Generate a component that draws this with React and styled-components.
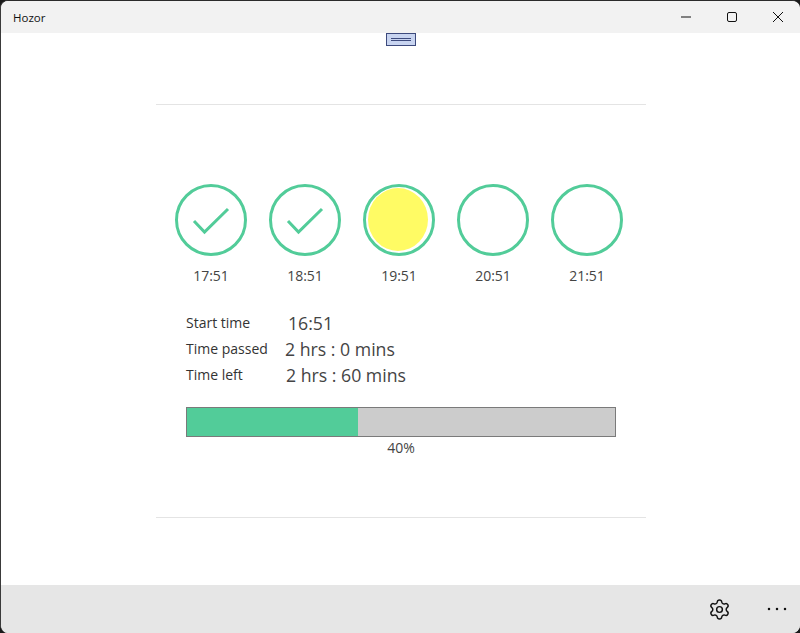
import React from "react";
import styled, { createGlobalStyle } from "styled-components";
import { Settings } from "lucide-react";

const Global = createGlobalStyle`
	html, body {
		margin: 0;
		padding: 0;
		background: #1a1a1a;
	}
	body {
		font-family: "Open Sans", "Noto Sans", "Liberation Sans", sans-serif;
		color: #333;
	}
`;

const Win = styled.div`
	width: 800px;
	height: 633px;
	box-sizing: border-box;
	display: flex;
	flex-direction: column;
	background: #fff;
	border-top: 1px solid #2b2b2b;
	border-left: 1px solid #3a3a3a;
	border-radius: 8px;
	overflow: hidden;
`;

const TitleBar = styled.div`
	height: 32px;
	flex: none;
	display: flex;
	align-items: center;
	justify-content: space-between;
	background: #f2f2f2;
	padding-left: 12px;
	font-size: 11.5px;
	color: #111;
`;

const WinButtons = styled.div`
	display: flex;
	margin-right: -1px;
`;

const WinButton = styled.div`
	width: 46px;
	height: 32px;
	display: flex;
	align-items: center;
	justify-content: center;
`;

const Main = styled.div`
	flex: 1;
	display: flex;
	flex-direction: column;
	align-items: center;
	position: relative;
`;

const Grip = styled.div`
	position: absolute;
	top: 0;
	left: 385px;
	width: 30px;
	height: 13px;
	box-sizing: border-box;
	background: #c8d4f0;
	border: 1px solid #3d4a7d;
	display: flex;
	align-items: center;
	justify-content: center;

	&::after {
		content: "";
		width: 20px;
		height: 3px;
		box-sizing: border-box;
		border-top: 1px solid #3d4a7d;
		border-bottom: 1px solid #3d4a7d;
	}
`;

const Panel = styled.div`
	width: 490px;
	height: 414px;
	margin-top: 71px;
	margin-left: 1px;
	box-sizing: border-box;
	border-top: 1px solid #e4e4e4;
	border-bottom: 1px solid #e4e4e4;
	padding: 79px 0 0 19px;
`;

const Steps = styled.div`
	display: flex;
	gap: 22px;
`;

const Step = styled.div`
	width: 72px;
	display: flex;
	flex-direction: column;
	align-items: center;
`;

const Circle = styled.div`
	width: 72px;
	height: 72px;
	box-sizing: border-box;
	border-radius: 50%;
	border: 3px solid #52cc99;
	display: flex;
	align-items: center;
	justify-content: center;
`;

const Sun = styled.div`
	width: 60px;
	height: 63px;
	margin: 0 2px 1px 0;
	flex: none;
	border-radius: 50%;
	background: #fffb64;
`;

const StepTime = styled.div`
	margin-top: 10px;
	font-size: 14px;
	line-height: 20px;
	color: #444;
`;

const Stats = styled.div`
	margin: 24px 0 0 11px;
	display: flex;
	flex-direction: column;
`;

const Stat = styled.div`
	height: 26px;
	display: flex;
	align-items: center;
`;

const StatName = styled.div`
	width: ${props => props.$w}px;
	font-size: 14px;
	color: #333;
	position: relative;
	top: -1px;
`;

const StatValue = styled.div`
	font-size: 17.7px;
	color: #444;
`;

const Bar = styled.div`
	margin: 19px 0 0 11px;
	width: 430px;
	height: 30px;
	box-sizing: border-box;
	border: 1px solid #7a7a7a;
	background: #cccccc;
`;

const BarFill = styled.div`
	height: 100%;
	background: #52cc99;
`;

const Percent = styled.div`
	margin-left: 11px;
	width: 430px;
	margin-top: 1px;
	text-align: center;
	font-size: 14px;
	line-height: 20px;
	color: #444;
`;

const Footer = styled.div`
	height: 48px;
	flex: none;
	display: flex;
	align-items: center;
	justify-content: flex-end;
	gap: 12px;
	background: #e6e6e6;
`;

const FooterButton = styled.div`
	width: 46px;
	height: 48px;
	display: flex;
	align-items: center;
	justify-content: center;
`;

const Check = () => (
	<svg width="40" height="30" viewBox="0 0 40 30">
		<path d="M3 16 L 13.5 27 L 37 4" fill="none" stroke="#52cc99" strokeWidth="3" />
	</svg>
);

const Dots = () => (
	<svg width="20" height="4" viewBox="0 0 20 4" fill="#111">
		<circle cx="2" cy="2" r="1.25" />
		<circle cx="10" cy="2" r="1.25" />
		<circle cx="18" cy="2" r="1.25" />
	</svg>
);

const steps = [
	{ time: "17:51", state: "done" },
	{ time: "18:51", state: "done" },
	{ time: "19:51", state: "now" },
	{ time: "20:51", state: "todo" },
	{ time: "21:51", state: "todo" },
];

export default function App() {
	return (
		<Win>
			<Global />
			<TitleBar>
				Hozor
				<WinButtons>
					<WinButton>
						<svg width="10" height="10" viewBox="0 0 10 10"><path d="M0 5h10" stroke="#111" /></svg>
					</WinButton>
					<WinButton>
						<svg width="10" height="10" viewBox="0 0 10 10"><rect x=".5" y=".5" width="9" height="9" rx="1.5" fill="none" stroke="#111" /></svg>
					</WinButton>
					<WinButton>
						<svg width="10" height="10" viewBox="0 0 10 10"><path d="M0 0l10 10M10 0L0 10" stroke="#111" /></svg>
					</WinButton>
				</WinButtons>
			</TitleBar>
			<Main>
				<Grip />
				<Panel>
					<Steps>
						{steps.map(s => (
							<Step key={s.time}>
								<Circle>
									{s.state === "done" ? <Check /> : null}
									{s.state === "now" ? <Sun /> : null}
								</Circle>
								<StepTime>{s.time}</StepTime>
							</Step>
						))}
					</Steps>
					<Stats>
						<Stat><StatName $w={102}>Start time</StatName><StatValue>16:51</StatValue></Stat>
						<Stat><StatName $w={99}>Time passed</StatName><StatValue>2 hrs : 0 mins</StatValue></Stat>
						<Stat><StatName $w={100}>Time left</StatName><StatValue>2 hrs : 60 mins</StatValue></Stat>
					</Stats>
					<Bar><BarFill style={{ width: "40%" }} /></Bar>
					<Percent>40%</Percent>
				</Panel>
			</Main>
			<Footer>
				<FooterButton><Settings size={23} strokeWidth={1.5} color="#111" /></FooterButton>
				<FooterButton><Dots /></FooterButton>
			</Footer>
		</Win>
	);
}
